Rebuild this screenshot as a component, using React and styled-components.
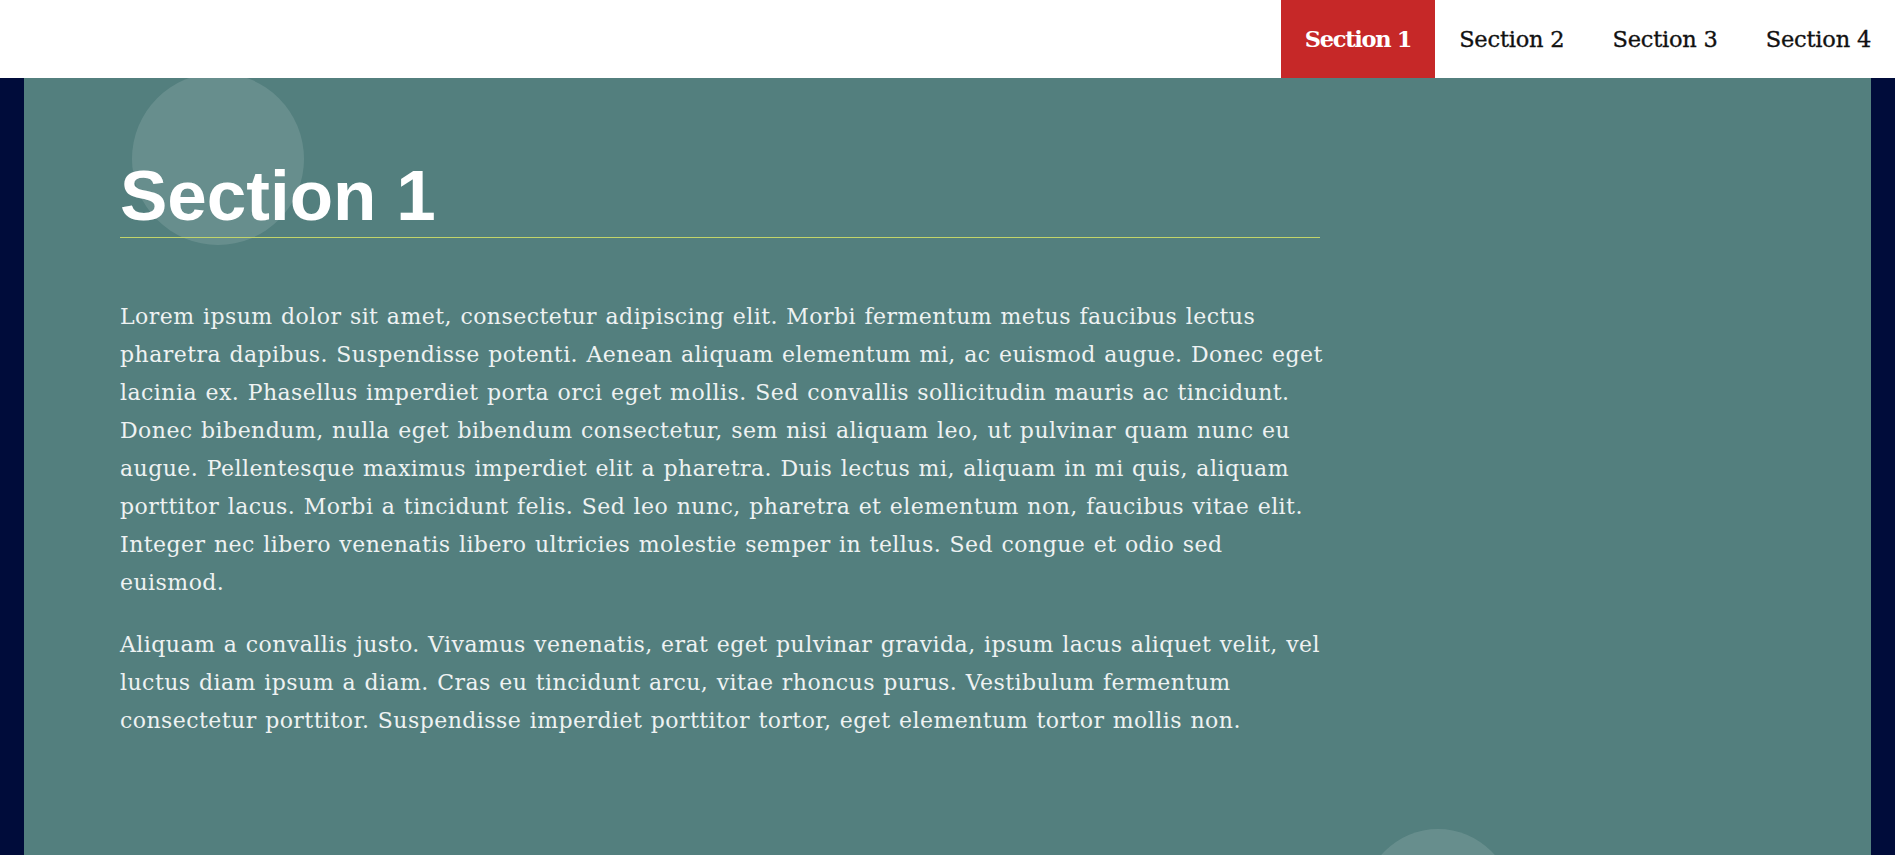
import React from "react";
import styled, { createGlobalStyle } from "styled-components";

const Global = createGlobalStyle`
  html, body { margin: 0; padding: 0; }
  body {
    background: #000c3a;
    font-family: "DejaVu Serif", "Liberation Serif", serif;
    overflow: hidden;
  }
`;

const Page = styled.div`
  display: flex;
  flex-direction: column;
  height: 855px;
`;

const Header = styled.header`
  display: flex;
  justify-content: flex-end;
  height: 78px;
  background: #ffffff;
  position: relative;
  z-index: 2;
`;

const NavItem = styled.a`
  display: flex;
  align-items: center;
  padding: 0 24px;
  font-family: "DejaVu Serif", serif;
  font-size: 22.5px;
  font-weight: ${(p) => (p.$active ? 700 : 400)};
  color: ${(p) => (p.$active ? "#ffffff" : "#111111")};
  background: ${(p) => (p.$active ? "#c62828" : "transparent")};
  text-decoration: none;
  letter-spacing: ${(p) => (p.$active ? "-1.3px" : "-0.2px")};
  -webkit-text-stroke: ${(p) => (p.$active ? "0" : "0.35px #111")};
`;

const Main = styled.main`
  position: relative;
  flex: 1;
  margin: 0 24px;
  background: #537f7e;
  padding: 0 96px;
  overflow: hidden;
`;

const Circle = styled.div`
  position: absolute;
  border-radius: 50%;
  background: rgba(255, 255, 255, 0.12);
  width: ${(p) => p.$size}px;
  height: ${(p) => p.$size}px;
  left: ${(p) => p.$x}px;
  top: ${(p) => p.$y}px;
`;

const Content = styled.div`
  position: relative;
  width: 1200px;
`;

const Title = styled.h1`
  margin: 82px 0 0;
  padding-bottom: 5px;
  border-bottom: 1px solid #c2d46a;
  font-family: "Liberation Sans", Arial, sans-serif;
  font-weight: 700;
  font-size: 71px;
  line-height: 72px;
  color: #ffffff;
`;

const Text = styled.p`
  margin: 0 0 24px;
  font-family: "DejaVu Serif", serif;
  font-size: 22px;
  line-height: 38px;
  letter-spacing: 0.45px;
  word-spacing: 1px;
  color: #eef2f2;
  &:first-of-type { margin-top: 60px; }
`;

const Line = styled.span`
  display: block;
  white-space: nowrap;
`;

const paragraphs = [
  [
    "Lorem ipsum dolor sit amet, consectetur adipiscing elit. Morbi fermentum metus faucibus lectus",
    "pharetra dapibus. Suspendisse potenti. Aenean aliquam elementum mi, ac euismod augue. Donec eget",
    "lacinia ex. Phasellus imperdiet porta orci eget mollis. Sed convallis sollicitudin mauris ac tincidunt.",
    "Donec bibendum, nulla eget bibendum consectetur, sem nisi aliquam leo, ut pulvinar quam nunc eu",
    "augue. Pellentesque maximus imperdiet elit a pharetra. Duis lectus mi, aliquam in mi quis, aliquam",
    "porttitor lacus. Morbi a tincidunt felis. Sed leo nunc, pharetra et elementum non, faucibus vitae elit.",
    "Integer nec libero venenatis libero ultricies molestie semper in tellus. Sed congue et odio sed",
    "euismod.",
  ],
  [
    "Aliquam a convallis justo. Vivamus venenatis, erat eget pulvinar gravida, ipsum lacus aliquet velit, vel",
    "luctus diam ipsum a diam. Cras eu tincidunt arcu, vitae rhoncus purus. Vestibulum fermentum",
    "consectetur porttitor. Suspendisse imperdiet porttitor tortor, eget elementum tortor mollis non.",
  ],
];

export default function App() {
  const items = ["Section 1", "Section 2", "Section 3", "Section 4"];
  return (
    <>
      <Global />
      <Page>
        <Header>
          {items.map((t, i) => (
            <NavItem key={t} href="#" $active={i === 0}>
              {t}
            </NavItem>
          ))}
        </Header>
        <Main>
          <Circle $size={172} $x={108} $y={-5} />
          <Circle $size={150} $x={1339} $y={751} />
          <Content>
            <Title>Section 1</Title>
            {paragraphs.map((lines, i) => (
              <Text key={i}>
                {lines.map((l, j) => (
                  <Line key={j}>{l}</Line>
                ))}
              </Text>
            ))}
          </Content>
        </Main>
      </Page>
    </>
  );
}
